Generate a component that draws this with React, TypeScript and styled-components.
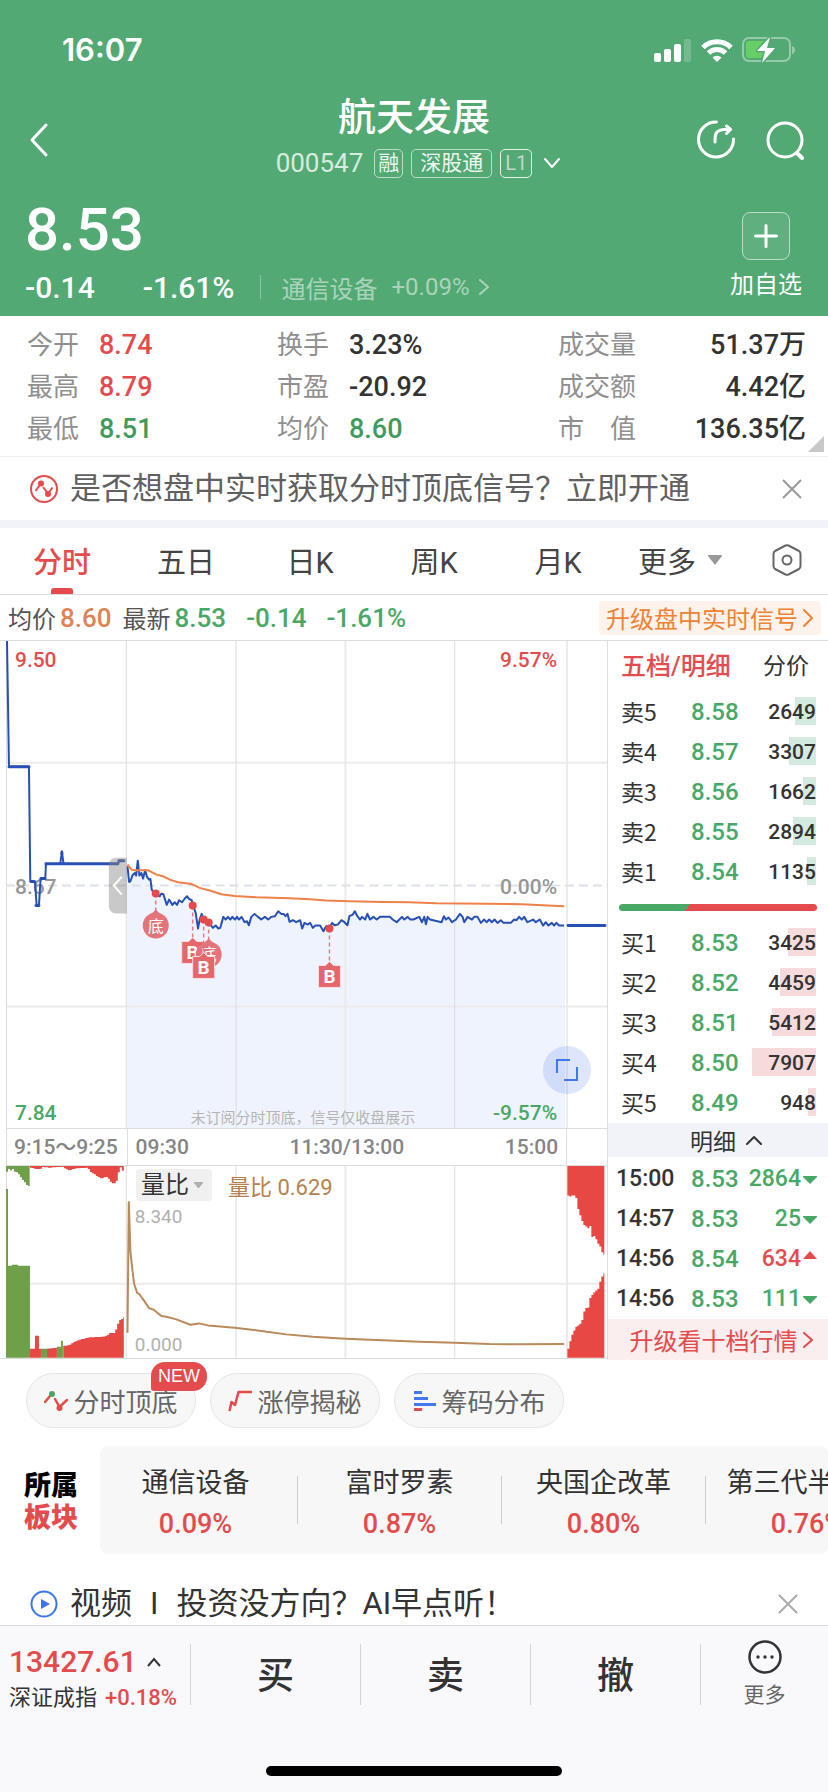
import React from "react";
import styled, { createGlobalStyle } from "styled-components";

const RED = "#e34b4d";
const GREEN = "#4aa866";
const INK = "#333333";
const LINE = "#dddddd";

const GlobalStyle = createGlobalStyle`
  * { box-sizing: border-box; }
  body {
    margin: 0;
    background: #fff;
    color: ${INK};
    font-family: Roboto, "Noto Sans CJK SC", sans-serif;
  }
  button, select {
    margin: 0;
    padding: 0;
    border: 0;
    background: none;
    color: inherit;
    font: inherit;
    cursor: pointer;
  }
  a { color: inherit; text-decoration: none; }
  h1, p, dl, dt, dd, ul { margin: 0; padding: 0; }
  ul { list-style: none; }
  svg { display: block; flex: none; }
`;

/* ---------- header ---------- */

const Page = styled.div`
  display: flex;
  flex-direction: column;
  min-height: 100vh;
  overflow-x: hidden;
`;

const Header = styled.header`
  height: 316px;
  background: #53a974;
  color: #fff;
`;

const StatusBar = styled.div`
  display: flex;
  align-items: center;
  justify-content: space-between;
  height: 92px;
  padding: 8px 32px 0 62px;
`;

const Clock = styled.time`
  font: 600 31px/40px Inter, sans-serif;
`;

const StatusIcons = styled.div`
  display: flex;
  align-items: center;
  gap: 9px;
`;

const TitleBar = styled.div`
  display: grid;
  grid-template-columns: 120px 1fr 120px;
  align-items: center;
  height: 96px;
  padding: 0 24px 0 24px;
`;

const TitleBlock = styled.div`
  display: flex;
  flex-direction: column;
  align-items: center;
`;

const StockName = styled.h1`
  font-size: 38px;
  font-weight: 500;
  line-height: 48px;
`;

const CodeRow = styled.div`
  display: flex;
  align-items: center;
  gap: 8px;
  height: 44px;
  margin-bottom: 2px;
  padding-left: 12px;
`;

const Code = styled.span`
  margin-right: 3px;
  font-size: 26px;
  line-height: 30px;
  color: #d6ecdf;
`;

const Tag = styled.span<{ $pad: number; $dim?: boolean }>`
  height: 29px;
  padding: 0 ${(p) => p.$pad}px;
  border: 1px solid ${(p) => (p.$dim ? "#e4f3ea" : "#b9dec8")};
  border-radius: 5px;
  font-size: ${(p) => (p.$dim ? 20 : 21)}px;
  line-height: 27px;
  color: ${(p) => (p.$dim ? "#c3d6cb" : "#eaf6ef")};
`;

const IconRow = styled.div`
  display: flex;
  justify-content: flex-end;
  gap: 30px;
`;

const IconButton = styled.button`
  display: flex;
  align-items: center;
`;

const QuoteRow = styled.div`
  display: flex;
  justify-content: space-between;
  padding: 6px 26px 0 25px;
`;

const LastPrice = styled.p`
  padding-top: 2px;
  font-size: 60px;
  font-weight: 500;
  line-height: 68px;
`;

const ChangeRow = styled.p`
  display: flex;
  align-items: center;
  height: 46px;
  font-size: 30px;
`;

const Change = styled.span`
  margin-right: 48px;
  font-weight: 500;
`;

const ChangePercent = styled.span`
  font-weight: 500;
`;

const IndustryLink = styled.a`
  display: flex;
  align-items: center;
  gap: 14px;
  height: 24px;
  margin-left: 26px;
  padding-left: 20px;
  border-left: 1px solid #8cc5a2;
  font-size: 24px;
  color: #a9d4b9;

  svg { margin-left: -5px; }
`;

const AddButton = styled.button`
  display: flex;
  flex-direction: column;
  align-items: center;
  gap: 7px;
  height: 104px;
  margin-top: 18px;
  font-size: 24px;
  line-height: 36px;
`;

const PlusBox = styled.span`
  display: flex;
  align-items: center;
  justify-content: center;
  width: 48px;
  height: 48px;
  border: 1px solid #b9dec8;
  border-radius: 8px;
  background: #60b07f;
`;

/* ---------- key figures ---------- */

const Stats = styled.dl`
  position: relative;
  display: grid;
  grid-template-columns: 250fr 281fr 248fr;
  padding: 8px 22px 6px 27px;
  border-bottom: 1px solid #ececec;
  font-size: 26px;
  line-height: 42px;
`;

const Stat = styled.div<{ $end?: boolean }>`
  display: flex;
  gap: 20px;
  justify-content: ${(p) => (p.$end ? "space-between" : "flex-start")};

  dt { color: #8f8f8f; }
`;

const StatValue = styled.dd<{ $color?: string }>`
  font-size: 27px;
  font-weight: 500;
  color: ${(p) => p.$color ?? INK};
`;

const Corner = styled.svg`
  position: absolute;
  right: 4px;
  bottom: 4px;
`;

const Notice = styled.div<{ $color: string }>`
  display: flex;
  align-items: center;
  gap: 12px;
  height: 63px;
  padding: 0 26px 0 30px;
  font-size: 31px;
  line-height: 40px;
  color: ${(p) => p.$color};
`;

const NoticeText = styled.a`
  flex: 1;
  white-space: nowrap;
`;

const Separator = styled.span`
  padding: 0 18px;
`;

/* ---------- period tabs ---------- */

const Tabs = styled.nav`
  display: grid;
  grid-template-columns: repeat(5, 124fr) 138fr 70fr;
  height: 75px;
  border-top: 8px solid #f2f3f8;
  border-bottom: 1px solid ${LINE};
`;

const Tab = styled.button<{ $active?: boolean; $menu?: boolean }>`
  position: relative;
  display: flex;
  align-items: center;
  justify-content: center;
  gap: 12px;
  padding: 0 ${(p) => (p.$menu ? 18 : 0)}px 2px 0;
  font-size: 29px;
  font-weight: ${(p) => (p.$active ? 500 : 400)};
  color: ${(p) => (p.$active ? RED : "#444")};

  &::after {
    content: "";
    display: ${(p) => (p.$active ? "block" : "none")};
    position: absolute;
    bottom: 0;
    width: 22px;
    height: 6px;
    border-radius: 3px 3px 0 0;
    background: ${RED};
  }
`;

const SettingsButton = styled(IconButton)`
  padding: 0 0 2px 14px;
`;

const InfoRow = styled.div`
  display: flex;
  align-items: center;
  justify-content: space-between;
  height: 45px;
  padding: 0 7px 0 8px;
`;

const InfoList = styled.p`
  display: flex;
  align-items: center;
  gap: 4px;
  font-size: 24px;
  color: #555;
`;

const InfoValue = styled.span<{ $color: string; $gap: number }>`
  margin-right: ${(p) => p.$gap}px;
  font-size: 26px;
  font-weight: 500;
  line-height: 34px;
  color: ${(p) => p.$color};
`;

const SignalLink = styled.a`
  display: flex;
  align-items: center;
  gap: 4px;
  height: 34px;
  padding: 0 7px;
  border-radius: 4px;
  background: #fef3ec;
  font-size: 24px;
  color: #ef8234;
`;

/* ---------- chart and order book ---------- */

const Market = styled.main`
  display: flex;
  border-top: 1px solid ${LINE};
`;

const ChartColumn = styled.section`
  position: relative;
  flex: 1;
  min-width: 0;
  border-right: 1px solid ${LINE};
`;

const ChartSvg = styled.svg`
  width: 100%;
  height: auto;
`;

const Axis = styled.div`
  display: grid;
  grid-template-columns: 121fr 441fr 40fr;
  height: 38px;
  margin-left: 6px;
  border: solid ${LINE};
  border-width: 1px 0 1px 1px;
  font-size: 21px;
  font-weight: 500;
  line-height: 36px;
  color: #858585;
`;

const AxisCell = styled.div`
  display: flex;
  justify-content: space-between;
  padding: 0 8px;
  border-right: 1px solid ${LINE};
  white-space: nowrap;
`;

const AxisRange = styled(AxisCell)`
  padding: 0 0 0 7px;
`;

const VolumePane = styled.div`
  position: relative;
  border-bottom: 1px solid ${LINE};
`;

const IndicatorBar = styled.div`
  position: absolute;
  top: 3px;
  left: 136px;
  display: flex;
  align-items: center;
  gap: 16px;
  font-size: 22px;
  color: #b5824f;
`;

const IndicatorPicker = styled.label`
  display: flex;
  align-items: center;
  height: 32px;
  padding: 0 9px 0 5px;
  border-radius: 4px;
  background: #f0f0f0;
  color: ${INK};

  select {
    appearance: none;
    width: 53px;
    font-size: 24px;
    line-height: 32px;
  }
`;

const ExpandButton = styled.button`
  position: absolute;
  top: 405px;
  right: 16px;
  display: flex;
  align-items: center;
  justify-content: center;
  width: 48px;
  height: 48px;
  border-radius: 50%;
  background: rgba(84, 130, 236, 0.2);
`;

const Book = styled.aside`
  width: 220px;
`;

const BookTabs = styled.div`
  display: flex;
  align-items: center;
  justify-content: space-between;
  height: 51px;
  padding: 0 19px 6px 13px;
`;

const BookTab = styled.button<{ $active?: boolean }>`
  font-size: ${(p) => (p.$active ? 25 : 23)}px;
  font-weight: ${(p) => (p.$active ? 500 : 400)};
  color: ${(p) => (p.$active ? RED : INK)};
`;

const BookTable = styled.table`
  width: 100%;
  border-collapse: collapse;
  table-layout: fixed;

  td, th {
    height: 40px;
    padding: 0;
    font-weight: 400;
    text-align: left;
    line-height: 28px;
  }
`;

const TradesTable = styled(BookTable)`
  margin-top: 2px;
`;

const LevelName = styled.th`
  width: 83px;
  font-family: "Noto Sans CJK SC", sans-serif;
  font-size: 23px;
  && { padding: 0 0 3px 13px; }
`;

const PriceCell = styled.td`
  width: 61px;
  font-size: 24px;
  color: ${GREEN};
  && { font-weight: 500; }
`;

const DepthCell = styled.td`
  position: relative;
  font-size: 21px;
  && { padding-right: 12px; text-align: right; font-weight: 500; }
`;

const DepthBar = styled.span<{ $side: "sell" | "buy" }>`
  position: absolute;
  z-index: -1;
  top: 5px;
  right: 12px;
  height: 28px;
  background: ${(p) => (p.$side === "sell" ? "#d4eadf" : "#f6dadc")};
`;

const RatioBar = styled.div`
  height: 7px;
  margin: 12px 11px;
  border-radius: 4px;
  background: linear-gradient(125deg, ${GREEN} 35%, ${RED} 35%);
`;

const TradesToggle = styled.button`
  display: flex;
  align-items: center;
  justify-content: center;
  gap: 10px;
  width: 100%;
  height: 34px;
  padding-left: 16px;
  background: #f2f3f8;
  font-size: 23px;
`;

const TimeCell = styled.th`
  width: 83px;
  font-size: 23px;
  && { padding-left: 8px; font-weight: 500; }
`;

const TradeCell = styled.td<{ $up?: boolean }>`
  font-size: 23px;
  color: ${(p) => (p.$up ? RED : GREEN)};
  && { padding-right: 11px; font-weight: 500; }

  span {
    display: flex;
    align-items: center;
    justify-content: flex-end;
    gap: 2px;
  }
`;

const DepthLink = styled.a`
  display: flex;
  align-items: center;
  justify-content: center;
  gap: 5px;
  height: 41px;
  padding-left: 6px;
  background: #fbeeef;
  font-size: 24px;
  color: ${RED};
`;

/* ---------- shortcuts and sectors ---------- */

const Shortcuts = styled.div`
  display: flex;
  gap: 14px;
  padding: 13px 26px 18px;
`;

const Shortcut = styled.button`
  position: relative;
  display: flex;
  align-items: center;
  justify-content: center;
  gap: 5px;
  width: 170px;
  height: 55px;
  border: 1px solid #e6e6e6;
  border-radius: 28px;
  background: #f7f7f7;
  font-size: 26px;
  color: #666;
`;

const NewBadge = styled.span`
  position: absolute;
  top: -12px;
  right: -12px;
  height: 29px;
  padding: 0 7px;
  border-radius: 14px 14px 14px 3px;
  background: ${RED};
  font: 400 18px/29px "Liberation Sans", sans-serif;
  color: #fff;
`;

const Sectors = styled.section`
  display: flex;
  align-items: center;
  gap: 22px;
  height: 108px;
  padding-left: 24px;
`;

const SectorsTitle = styled.p`
  padding-top: 3px;
  font-size: 27px;
  font-weight: 900;
  line-height: 32px;
  color: #000;

  span { display: block; color: ${RED}; }
`;

const SectorPanel = styled.div`
  flex: 1;
  min-width: 0;
  height: 108px;
  overflow: hidden;
  border-radius: 8px;
  background: #f7f7f7;
`;

const SectorList = styled.ul`
  display: flex;
  margin-left: -6px;
  padding-top: 30px;
`;

const Sector = styled.li`
  flex: none;
  display: flex;
  flex-direction: column;
  align-items: center;
  justify-content: center;
  width: 204px;
  height: 48px;
  padding-top: 8px;
  border-right: 1px solid #ccc;
  font-size: 27px;
  line-height: 41px;
  white-space: nowrap;

  strong { font-weight: 500; color: ${RED}; }
`;

const VideoRow = styled(Notice)`
  height: 71px;
  padding: 28px 30px 0 30px;
`;

/* ---------- bottom bar ---------- */

const Footer = styled.footer`
  flex: 1;
  display: flex;
  flex-direction: column;
  justify-content: space-between;
  border-top: 1px solid #dadade;
  background: #f9f9fc;
`;

const Actions = styled.div`
  display: flex;
  padding-top: 18px;
`;

const IndexBlock = styled.button`
  width: 190px;
  height: 61px;
  padding-left: 9px;
  text-align: left;
`;

const IndexValue = styled.span`
  display: flex;
  align-items: center;
  gap: 10px;
  font-size: 30px;
  font-weight: 500;
  line-height: 36px;
  color: ${RED};
`;

const IndexName = styled.span`
  display: flex;
  gap: 8px;
  font-size: 22px;
  line-height: 36px;

  em { font-style: normal; font-weight: 500; color: ${RED}; }
`;

const Action = styled.button`
  flex: 1;
  height: 61px;
  padding-bottom: 3px;
  border-left: 1px solid #d4d4d8;
  font-size: 37px;
  font-weight: 500;
`;

const MoreAction = styled.button`
  display: flex;
  flex-direction: column;
  align-items: center;
  width: 128px;
  height: 61px;
  border-left: 1px solid #d4d4d8;
  font-size: 21px;
  line-height: 40px;
  color: #666;

  svg { margin-top: -5px; }
`;

const HomeIndicator = styled.div`
  width: 296px;
  height: 10px;
  margin: 60px auto 16px;
  border-radius: 5px;
  background: #000;
`;

/* ---------- shared drawings ---------- */

type ChevronProps = { d: string; w: number; h: number; stroke?: number };

const Chevron = ({ d, w, h, stroke = 2 }: ChevronProps) => (
  <svg width={w} height={h} viewBox={`0 0 ${w} ${h}`} fill="none" stroke="currentColor" strokeWidth={stroke} strokeLinecap="round" strokeLinejoin="round" aria-hidden>
    <path d={d} />
  </svg>
);

const CloseButton = ({ color }: { color: string }) => (
  <IconButton aria-label="关闭">
    <svg width="20" height="20" viewBox="0 0 20 20" stroke={color} strokeWidth="2">
      <path d="M1 1L19 19M19 1L1 19" />
    </svg>
  </IconButton>
);

const Triangle = ({ up }: { up?: boolean }) => (
  <svg width="14" height="16" viewBox="0 0 14 16" fill="currentColor" aria-hidden>
    <path d={up ? "M0 8L7 0L14 8Z" : "M0 5L14 5L14 6L7 13L0 6Z"} />
  </svg>
);

/* ---------- data ---------- */

const STATS = [
  ["今开", "8.74", RED], ["换手", "3.23%", INK], ["成交量", "51.37万", INK],
  ["最高", "8.79", RED], ["市盈", "-20.92", INK], ["成交额", "4.42亿", INK],
  ["最低", "8.51", "#3f9a5b"], ["均价", "8.60", "#3f9a5b"], ["市　值", "136.35亿", INK],
];

const SELLS: [string, string, number][] = [
  ["卖5", "8.58", 2649], ["卖4", "8.57", 3307], ["卖3", "8.56", 1662], ["卖2", "8.55", 2894], ["卖1", "8.54", 1135],
];
const BUYS: [string, string, number][] = [
  ["买1", "8.53", 3425], ["买2", "8.52", 4459], ["买3", "8.51", 5412], ["买4", "8.50", 7907], ["买5", "8.49", 948],
];
const TRADES: [string, string, number, boolean][] = [
  ["15:00", "8.53", 2864, false], ["14:57", "8.53", 25, false], ["14:56", "8.54", 634, true], ["14:56", "8.53", 111, false],
];
const SECTORS = [
  ["通信设备", "0.09%"], ["富时罗素", "0.87%"], ["央国企改革", "0.80%"], ["第三代半导体", "0.76%"],
];

type Point = [number, number];

/* Chart samples are stored at three units per chart pixel. */
const UNIT = 3;

const AUCTION: Point[] = [[21, 33], [27, 411], [87, 411], [91, 755], [105, 755], [110, 827], [117, 827], [122, 748], [136, 748], [138, 703], [181, 703], [186, 665], [191, 703], [355, 703], [357, 694], [374, 694]];

const PRICE: Point[] = [[383, 710], [388, 757], [392, 755], [398, 737], [405, 730], [409, 738], [414, 693], [419, 738], [425, 730], [430, 747], [436, 722], [442, 742], [448, 750], [452, 748], [456, 780], [463, 792], [480, 800], [485, 792], [491, 794], [501, 826], [508, 810], [518, 826], [525, 818], [532, 826], [538, 812], [547, 818], [556, 806], [562, 800], [568, 808], [576, 812], [580, 827], [588, 850], [595, 897], [600, 870], [606, 853], [612, 870], [628, 880], [640, 895], [648, 888], [656, 897], [662, 895], [671, 862], [678, 870], [685, 862], [692, 870], [698, 862], [706, 870], [712, 862], [718, 870], [726, 862], [735, 878], [742, 875], [748, 887], [755, 862], [765, 853], [775, 862], [785, 870], [796, 862], [806, 870], [815, 862], [826, 860], [836, 845], [845, 853], [852, 853], [858, 860], [864, 853], [870, 877], [880, 872], [890, 878], [902, 872], [908, 897], [915, 880], [925, 885], [932, 880], [940, 895], [948, 888], [962, 888], [972, 905], [980, 890], [989, 897], [998, 880], [1005, 887], [1015, 885], [1026, 872], [1035, 878], [1044, 887], [1050, 860], [1060, 855], [1066, 845], [1074, 860], [1082, 870], [1088, 862], [1097, 870], [1104, 853], [1112, 870], [1122, 862], [1132, 870], [1142, 862], [1172, 862], [1180, 870], [1192, 878], [1200, 870], [1208, 862], [1215, 870], [1225, 862], [1233, 870], [1242, 870], [1260, 862], [1268, 878], [1275, 862], [1280, 884], [1285, 862], [1292, 870], [1327, 878], [1334, 860], [1340, 870], [1348, 864], [1358, 878], [1370, 870], [1382, 853], [1390, 862], [1395, 878], [1405, 862], [1418, 870], [1425, 862], [1435, 862], [1445, 880], [1455, 870], [1462, 878], [1470, 870], [1478, 878], [1486, 870], [1495, 880], [1505, 872], [1513, 880], [1535, 880], [1545, 870], [1552, 872], [1560, 862], [1568, 870], [1575, 862], [1585, 878], [1602, 870], [1610, 878], [1622, 870], [1632, 888], [1640, 878], [1648, 888], [1658, 880], [1665, 888], [1672, 880], [1680, 888], [1695, 888]];

const AVERAGE: Point[] = [[383, 705], [395, 720], [405, 722], [445, 722], [470, 735], [490, 740], [510, 750], [535, 758], [575, 763], [600, 775], [630, 783], [665, 794], [705, 799], [770, 803], [870, 806], [930, 809], [980, 813], [1050, 815], [1150, 817], [1230, 818], [1310, 821], [1570, 824], [1630, 827], [1695, 830]];

const RATIO: Point[] = [[383, 942], [387, 549], [392, 700], [398, 755], [403, 795], [412, 822], [418, 825], [432, 845], [448, 868], [462, 873], [485, 892], [500, 894], [530, 902], [572, 918], [598, 914], [625, 920], [705, 927], [780, 936], [860, 947], [940, 954], [1038, 960], [1150, 965], [1260, 969], [1366, 972], [1470, 976], [1570, 977], [1695, 976]];

const toPoints = (list: Point[], top: number) =>
  list.map(([x, y]) => `${x / UNIT},${(y - top) / UNIT}`).join(" ");

/* Turns an outline into a run of flat two-pixel bars standing on a base line. */
function bars(outline: Point[], base: number, top: number, left = 0) {
  const step = 6;
  const end = outline[outline.length - 1][0];
  let path = "";
  for (let x = outline[0][0]; x < end; x += step) {
    const next = outline.findIndex((p) => p[0] > x);
    const [x0, y0] = outline[next - 1];
    const [x1, y1] = outline[next];
    const y = Math.round(y0 + ((y1 - y0) * (x - x0)) / (x1 - x0));
    const right = Math.min(x + step, end);
    path += `M${left + x / UNIT} ${(base - top) / UNIT}V${(y - top) / UNIT}H${left + right / UNIT}V${(base - top) / UNIT}Z`;
  }
  return path;
}

const Grid = ({ height, rows }: { height: number; rows: number[] }) => (
  <g stroke="#ebebeb" strokeWidth="2">
    {rows.map((y) => <path key={y} d={`M6 ${y}H608`} />)}
    <path d={`M346 0V${height}M568 0V${height}`} />
    <path d={`M6.5 0V${height}M126.5 0V${height}`} stroke="#dcdcdc" strokeWidth="1" />
    <path d={`M236.5 0V${height}M455.5 0V${height}`} stroke="#dcdcdc" strokeWidth="1" />
  </g>
);

const BottomMark = ({ x, y, pin }: { x: number; y: number; pin: number }) => (
  <g>
    <path d={`M${x} ${y}V${pin - 14}`} stroke="#df7f86" strokeWidth="1.5" strokeDasharray="4 3" />
    <path d={`M${x - 5} ${pin - 11}L${x} ${pin - 16}L${x + 5} ${pin - 11}Z`} fill="#e4737b" />
    <circle cx={x} cy={pin} r="13" fill="#e4737b" />
    <text x={x} y={pin + 6} fontSize="16" fill="#fff" textAnchor="middle">底</text>
    <circle cx={x} cy={y} r="4" fill={RED} />
  </g>
);

const BuyMark = ({ x, y, pin }: { x: number; y: number; pin: number }) => (
  <g>
    <path d={`M${x} ${y}V${pin - 14}`} stroke="#df7f86" strokeWidth="1.5" strokeDasharray="4 3" />
    <path d={`M${x - 11} ${pin - 11}H${x - 4}L${x} ${pin - 15}L${x + 4} ${pin - 11}H${x + 11}V${pin + 11}H${x - 11}Z`} fill="#e5666b" stroke="#f8dfe2" strokeWidth="1" />
    <text x={x} y={pin + 7} fontSize="19" fontWeight="700" fill="#fff" textAnchor="middle">B</text>
    <circle cx={x} cy={y} r="4" fill={RED} />
  </g>
);

const PriceChart = () => {
  const line = toPoints(PRICE, 33);
  return (
    <ChartSvg viewBox="0 0 608 488" role="img" aria-label="分时走势">
      <path d={`M127 488V226L${line.split(" ").join("L")}L566 285V488Z`} fill="#eff3fd" />
      <Grid height={488} rows={[122, 366]} />
      <path d="M6 245H606" stroke="#dbe1ea" strokeWidth="2" strokeDasharray="9 5" />
      <g fontSize="21" fontWeight="500">
        <text x="15" y="26" fill={RED}>9.50</text>
        <text x="558" y="26" fill={RED} textAnchor="end">9.57%</text>
        <text x="15" y="253" fill="#969696">8.67</text>
        <text x="558" y="253" fill="#969696" textAnchor="end">0.00%</text>
        <text x="15" y="480" fill={GREEN}>7.84</text>
        <text x="558" y="480" fill={GREEN} textAnchor="end">-9.57%</text>
      </g>
      <text x="191" y="483" fontSize="15" fill="#b5b5b5">未订阅分时顶底，信号仅收盘展示</text>
      <g fill="none" stroke="#2850b4" strokeWidth="2" strokeLinejoin="round">
        <polyline points={toPoints(AUCTION, 33)} />
        <polyline points={line} />
        <path strokeWidth="3" strokeLinecap="round" d="M9 126H29M31 241H34M36 265H39M41 238H45M46 223H118M119 220H124M62 212V213M569 285H606" />
      </g>
      <polyline points={toPoints(AVERAGE, 33)} fill="none" stroke="#ee8048" strokeWidth="2" />
      <path d="M127 217H117Q109 217 109 225V265Q109 273 117 273H127Z" fill="#888" fillOpacity=".45" />
      <path d="M122 236L114 245L122 254" fill="none" stroke="#fff" strokeWidth="2" />
      <BottomMark x={156} y={253} pin={285} />
      <BuyMark x={193} y={265} pin={312} />
      <BottomMark x={209} y={282} pin={314} />
      <BuyMark x={204} y={279} pin={327} />
      <BuyMark x={330} y={288} pin={336} />
    </ChartSvg>
  );
};

const VolumeChart = () => (
  <ChartSvg viewBox="0 0 608 192" role="img" aria-label="量比">
    <Grid height={192} rows={[118]} />
    <g fill="#6f9f49">
      <path d="M6 192V23H8V100H12V99H18V100H30V192Z" />
      <path d={bars([[18, 458], [24, 450], [32, 455], [38, 448], [42, 458], [50, 460], [60, 475], [70, 488], [80, 500], [89, 503]], 441, 441)} />
      <path d="M42 0H48V1H42ZM57 0H63V1H57Z" />
    </g>
    <g fill="#e84843">
      <path d={bars([[90, 446], [108, 450], [123, 449], [125, 444], [150, 446], [185, 442], [190, 447], [205, 455], [215, 450], [230, 448], [262, 446], [268, 458], [280, 465], [290, 472], [300, 478], [320, 473], [330, 488], [338, 495], [345, 492], [350, 480], [356, 450], [360, 445], [366, 455], [372, 460]], 441, 441)} />
      <path d="M30 192V183H35V170H39V183H41V192ZM47 192V183L57 182V192Z" />
      <path d={bars([[190, 981], [205, 980], [220, 970], [240, 962], [265, 956], [300, 955], [320, 950], [328, 943], [342, 943], [345, 935], [350, 920], [356, 905], [366, 900], [372, 893]], 1017, 441)} />
      <path d={bars([[475, 260], [480, 263], [490, 258], [498, 262], [505, 300], [512, 322], [520, 345], [535, 358], [542, 350], [546, 384], [556, 380], [562, 402], [570, 410], [577, 430], [586, 440]], 171, 171, 410)} />
      <path d={bars([[475, 720], [486, 680], [498, 655], [515, 642], [525, 600], [537, 595], [541, 568], [555, 548], [565, 540], [572, 515], [580, 495], [586, 490]], 747, 171, 410)} />
    </g>
    <path d="M41 192V183H47V192ZM57 192V181H61V175H63V192Z" fill="#6f9f49" />
    <polyline points={toPoints(RATIO, 441)} fill="none" stroke="#b98a5a" strokeWidth="2" strokeLinejoin="round" />
    <g fontSize="19" fill="#b0b0b0">
      <text x="135" y="57">8.340</text>
      <text x="135" y="185">0.000</text>
    </g>
  </ChartSvg>
);

const DepthRows = ({ side, rows }: { side: "sell" | "buy"; rows: [string, string, number][] }) => (
  <BookTable>
    <tbody>
      {rows.map(([name, price, volume]) => (
        <tr key={name}>
          <LevelName scope="row">{name}</LevelName>
          <PriceCell>{price}</PriceCell>
          <DepthCell>
            <DepthBar $side={side} style={{ width: Math.round((volume / 7907) * 64) }} />
            {volume}
          </DepthCell>
        </tr>
      ))}
    </tbody>
  </BookTable>
);

const AxisEnd = styled.span`
  padding-right: 9px;
`;

export default function App() {
  return (
    <Page>
      <GlobalStyle />
      <Header>
        <StatusBar>
          <Clock>16:07</Clock>
          <StatusIcons>
            <svg width="38" height="24" viewBox="0 0 38 24" fill="#fff">
              <rect x="0" y="15" width="7" height="9" rx="2" />
              <rect x="10" y="11" width="7" height="13" rx="2" />
              <rect x="20" y="6" width="7" height="18" rx="2" />
              <rect x="30" y="1" width="7" height="23" rx="2" opacity=".2" />
            </svg>
            <svg width="32" height="24" viewBox="0 0 32 24" fill="none" stroke="#fff" strokeWidth="5">
              <path d="M2 9.500A20 20 0 0 1 30 9.500" />
              <path d="M7.500 15A12 12 0 0 1 24.500 15" />
              <path d="M16 24L11.500 19.500A6.500 6.500 0 0 1 20.500 19.500Z" fill="#fff" stroke="none" />
            </svg>
            <svg width="54" height="28" viewBox="0 0 54 28">
              <rect x="1" y="2" width="47" height="23" rx="6" fill="none" stroke="#95cbaa" strokeWidth="2" />
              <path d="M50 10Q53 11 53 14Q53 17 50 18Z" fill="#95cbaa" />
              <rect x="4" y="5" width="20" height="17" rx="3" fill="#66d066" />
              <path d="M28 1L15 15H23L20 27L33 12H25Z" fill="#fff" stroke="#53a974" strokeWidth="3" paintOrder="stroke" strokeLinejoin="round" />
            </svg>
          </StatusIcons>
        </StatusBar>
        <TitleBar>
          <IconButton aria-label="返回">
            <Chevron w={30} h={36} stroke={3} d="M22 3L8 18L22 33" />
          </IconButton>
          <TitleBlock>
            <StockName>航天发展</StockName>
            <CodeRow>
              <Code>000547</Code>
              <Tag $pad={3}>融</Tag>
              <Tag $pad={8}>深股通</Tag>
              <Tag $pad={4} $dim>L1</Tag>
              <IconButton aria-label="展开">
                <Chevron w={24} h={12} d="M5 2L12 10L19 2" />
              </IconButton>
            </CodeRow>
          </TitleBlock>
          <IconRow>
            <IconButton aria-label="分享">
              <svg width="40" height="40" viewBox="0 0 40 40" fill="none" stroke="#fff" strokeWidth="3" strokeLinecap="round" strokeLinejoin="round">
                <path d="M20.500 2A17.500 17.500 0 1 0 37.500 19" />
                <path d="M19 22V19Q19 9 29 9.500H34" />
                <path d="M30.500 6L34.500 9.500L30.500 13.500" />
              </svg>
            </IconButton>
            <IconButton aria-label="搜索">
              <svg width="38" height="40" viewBox="0 0 38 40" fill="none" stroke="#fff" strokeWidth="3" strokeLinecap="round">
                <circle cx="19" cy="20" r="17" />
                <path d="M31 33L36 38" strokeWidth="4" />
              </svg>
            </IconButton>
          </IconRow>
        </TitleBar>
        <QuoteRow>
          <div>
            <LastPrice>8.53</LastPrice>
            <ChangeRow>
              <Change>-0.14</Change>
              <ChangePercent>-1.61%</ChangePercent>
              <IndustryLink href="#industry">
                通信设备 <span>+0.09%</span>
                <Chevron w={12} h={18} d="M2 2L10 9L2 16" />
              </IndustryLink>
            </ChangeRow>
          </div>
          <AddButton>
            <PlusBox>
              <svg width="24" height="24" viewBox="0 0 24 24" stroke="#fff" strokeWidth="3" strokeLinecap="round">
                <path d="M12 1.500V22.500M1.500 12H22.500" />
              </svg>
            </PlusBox>
            加自选
          </AddButton>
        </QuoteRow>
      </Header>

      <Stats>
        {STATS.map(([label, value, color], i) => (
          <Stat key={label + i} $end={i % 3 === 2}>
            <dt>{label}</dt>
            <StatValue $color={color}>{value}</StatValue>
          </Stat>
        ))}
        <Corner width="16" height="16" viewBox="0 0 16 16"><path d="M16 0V16H0Z" fill="#c8c8c8" /></Corner>
      </Stats>

      <Notice $color="#606060">
        <svg width="28" height="28" viewBox="0 0 28 28" fill="none" stroke={RED} strokeWidth="2">
          <circle cx="14" cy="14" r="13" />
          <path d="M5.500 16L10.500 9M13 12L18 18.500L22.500 12.500" />
          <circle cx="11" cy="8.500" r="2" fill={RED} />
          <circle cx="18" cy="19" r="2" fill={RED} />
        </svg>
        <NoticeText href="#signal">是否想盘中实时获取分时顶底信号？立即开通</NoticeText>
        <CloseButton color="#999" />
      </Notice>

      <Tabs>
        <Tab $active>分时</Tab>
        <Tab>五日</Tab>
        <Tab>日K</Tab>
        <Tab>周K</Tab>
        <Tab>月K</Tab>
        <Tab $menu>
          更多
          <svg width="14" height="10" viewBox="0 0 14 10"><path d="M0 0H14V1L7 10L0 1Z" fill="#999" /></svg>
        </Tab>
        <SettingsButton aria-label="设置">
          <svg width="30" height="32" viewBox="0 0 30 32" fill="none" stroke="#666" strokeWidth="2" strokeLinejoin="round">
            <path d="M13.500 1.500Q15 0.800 16.500 1.500L27 7Q28.500 8 28.500 10V22Q28.500 24 27 25L16.500 30.500Q15 31.200 13.500 30.500L3 25Q1.500 24 1.500 22V10Q1.500 8 3 7Z" />
            <circle cx="15" cy="16" r="4.500" />
          </svg>
        </SettingsButton>
      </Tabs>

      <InfoRow>
        <InfoList>
          均价<InfoValue $color="#dd8452" $gap={7}>8.60</InfoValue>
          最新<InfoValue $color={GREEN} $gap={16}>8.53</InfoValue>
          <InfoValue $color={GREEN} $gap={16}>-0.14</InfoValue>
          <InfoValue $color={GREEN} $gap={0}>-1.61%</InfoValue>
        </InfoList>
        <SignalLink href="#upgrade">
          升级盘中实时信号
          <Chevron w={12} h={20} d="M2 2L10 10L2 18" />
        </SignalLink>
      </InfoRow>

      <Market>
        <ChartColumn>
          <PriceChart />
          <ExpandButton aria-label="全屏">
            <svg width="22" height="22" viewBox="0 0 22 22" fill="none" stroke="#3f78ee" strokeWidth="2">
              <path d="M1 14V1H14M21 8V21H8" />
            </svg>
          </ExpandButton>
          <Axis>
            <AxisRange>9:15～9:25</AxisRange>
            <AxisCell>
              <span>09:30</span>
              <span>11:30/13:00</span>
              <span>15:00</span>
            </AxisCell>
          </Axis>
          <VolumePane>
            <VolumeChart />
            <IndicatorBar>
              <IndicatorPicker>
                <select aria-label="指标" defaultValue="量比">
                  <option>量比</option>
                </select>
                <svg width="9" height="6" viewBox="0 0 9 6"><path d="M0 0H9V1L5 6H4L0 1Z" fill="#b0b0b0" /></svg>
              </IndicatorPicker>
              <span>量比 0.629</span>
            </IndicatorBar>
          </VolumePane>
        </ChartColumn>
        <Book>
          <BookTabs>
            <BookTab $active>五档/明细</BookTab>
            <BookTab>分价</BookTab>
          </BookTabs>
          <DepthRows side="sell" rows={SELLS} />
          <RatioBar />
          <DepthRows side="buy" rows={BUYS} />
          <TradesToggle>
            明细
            <Chevron w={16} h={10} d="M1 9L8 2L15 9" />
          </TradesToggle>
          <TradesTable>
            <tbody>
              {TRADES.map(([time, price, volume, up], i) => (
                <tr key={i}>
                  <TimeCell scope="row">{time}</TimeCell>
                  <PriceCell>{price}</PriceCell>
                  <TradeCell $up={up}><span>{volume}<Triangle up={up} /></span></TradeCell>
                </tr>
              ))}
            </tbody>
          </TradesTable>
          <DepthLink href="#depth">
            升级看十档行情
            <Chevron w={10} h={16} d="M1 1L9 8L1 15" />
          </DepthLink>
        </Book>
      </Market>

      <Shortcuts>
        <Shortcut>
          <svg width="24" height="22" viewBox="0 0 24 22" fill="none" stroke={RED} strokeWidth="2.500" strokeLinecap="round">
            <path d="M1 12L6 6" /><path d="M11 9L15.500 17L23 10" />
            <circle cx="8" cy="4" r="3" fill={GREEN} stroke="none" />
            <circle cx="15.500" cy="18" r="3" fill={RED} stroke="none" />
          </svg>
          分时顶底
          <NewBadge>NEW</NewBadge>
        </Shortcut>
        <Shortcut>
          <svg width="24" height="22" viewBox="0 0 24 22" fill="none" stroke={RED} strokeWidth="2.500" strokeLinejoin="round">
            <path d="M1.500 21L3.500 12L7 15L10.500 2H24" />
          </svg>
          涨停揭秘
        </Shortcut>
        <Shortcut>
          <svg width="24" height="22" viewBox="0 0 24 22">
            <path d="M2 1H10V4H2ZM2 7H16V10H2ZM2 13H24V16H2Z" fill="#4379ee" />
            <path d="M2 18H10V21H2Z" fill={RED} />
          </svg>
          筹码分布
        </Shortcut>
      </Shortcuts>

      <Sectors>
        <SectorsTitle>所属<span>板块</span></SectorsTitle>
        <SectorPanel>
          <SectorList>
            {SECTORS.map(([name, change]) => (
              <Sector key={name}>{name}<strong>{change}</strong></Sector>
            ))}
          </SectorList>
        </SectorPanel>
      </Sectors>

      <VideoRow $color={INK}>
        <svg width="28" height="28" viewBox="0 0 28 28">
          <circle cx="14" cy="14" r="12.500" fill="none" stroke="#3b74f0" strokeWidth="2" />
          <path d="M11 9L20 14L11 19Z" fill="#3b74f0" />
        </svg>
        <NoticeText href="#video">视频<Separator>I</Separator>投资没方向？AI早点听！</NoticeText>
        <CloseButton color="#aaa" />
      </VideoRow>

      <Footer>
        <Actions>
          <IndexBlock>
            <IndexValue>
              13427.61
              <svg width="14" height="10" viewBox="0 0 14 10" fill="none" stroke={INK} strokeWidth="2"><path d="M1 9L7 2L13 9" /></svg>
            </IndexValue>
            <IndexName>深证成指 <em>+0.18%</em></IndexName>
          </IndexBlock>
          <Action>买</Action>
          <Action>卖</Action>
          <Action>撤</Action>
          <MoreAction>
            <svg width="36" height="36" viewBox="0 0 36 36">
              <circle cx="18" cy="18" r="15.500" fill="none" stroke={INK} strokeWidth="2.500" />
              <circle cx="11" cy="18" r="1.700" fill={INK} /><circle cx="18" cy="18" r="1.700" fill={INK} /><circle cx="25" cy="18" r="1.700" fill={INK} />
            </svg>
            更多
          </MoreAction>
        </Actions>
        <HomeIndicator />
      </Footer>
    </Page>
  );
}
